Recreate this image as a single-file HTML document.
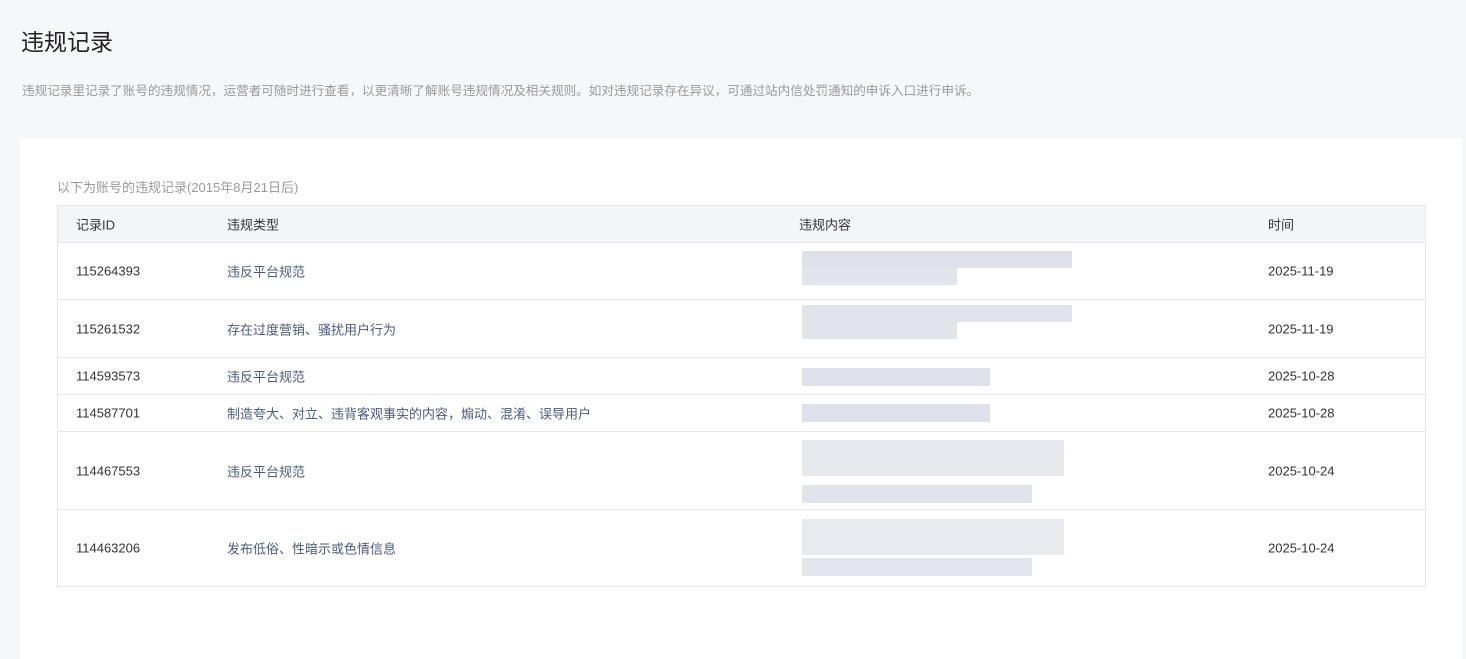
<!DOCTYPE html>
<html><head><meta charset="utf-8"><style>
body{margin:0;background:#f6f7f9;font-family:"Liberation Sans","Noto Sans CJK SC",sans-serif;width:1466px;height:638px;overflow:hidden;position:relative}
.t{position:absolute;left:21px;top:23px;font-size:23px;color:#222}
.d{position:absolute;left:22px;top:80px;font-size:12.6px;color:#9a9a9a}
.card{position:absolute;left:20px;top:139px;width:1442px;height:520px;background:#fff}
.s{position:absolute;left:57px;top:177px;font-size:13px;color:#999}
.tb{position:absolute;left:57px;top:205px;width:1367px;border:1px solid #e4e6eb;border-bottom:none}
.r{position:relative;border-bottom:1px solid #e4e6eb;font-size:13px;color:#333}
.r span{position:absolute;top:50%;transform:translateY(-50%);white-space:nowrap}
.h{background:#f4f5f8;color:#333}
.c1{left:18px}.c2{left:169px;color:#4a5a7a}.c3{left:741px}.c4{left:1210px}
.b{position:absolute;background:#d6d9e3}
</style></head><body>
<div class="t">违规记录</div>
<div class="d">违规记录里记录了账号的违规情况，运营者可随时进行查看，以更清晰了解账号违规情况及相关规则。如对违规记录存在异议，可通过站内信处罚通知的申诉入口进行申诉。</div>
<div class="card"></div>
<div class="s">以下为账号的违规记录(2015年8月21日后)</div>
<div class="tb">
<div class="r h" style="height:36px"><span class="c1">记录ID</span><span class="c2" style="color:#333">违规类型</span><span class="c3">违规内容</span><span class="c4">时间</span></div>
<div class="r" style="height:56px"><span class="c1">115264393</span><span class="c2">违反平台规范</span><span class="c4">2025-11-19</span></div>
<div class="r" style="height:57px"><span class="c1">115261532</span><span class="c2">存在过度营销、骚扰用户行为</span><span class="c4">2025-11-19</span></div>
<div class="r" style="height:36px"><span class="c1">114593573</span><span class="c2">违反平台规范</span><span class="c4">2025-10-28</span></div>
<div class="r" style="height:36px"><span class="c1">114587701</span><span class="c2">制造夸大、对立、违背客观事实的内容，煽动、混淆、误导用户</span><span class="c4">2025-10-28</span></div>
<div class="r" style="height:77px"><span class="c1">114467553</span><span class="c2">违反平台规范</span><span class="c4">2025-10-24</span></div>
<div class="r" style="height:76px"><span class="c1">114463206</span><span class="c2">发布低俗、性暗示或色情信息</span><span class="c4">2025-10-24</span></div>
</div>
<div class="b" style="left:802px;top:251px;width:270px;height:17px;opacity:.8"></div>
<div class="b" style="left:802px;top:268px;width:155px;height:17px;opacity:.7"></div>
<div class="b" style="left:802px;top:305px;width:270px;height:17px;opacity:.75"></div>
<div class="b" style="left:802px;top:322px;width:155px;height:17px;opacity:.7"></div>
<div class="b" style="left:802px;top:368px;width:188px;height:18px;opacity:.8"></div>
<div class="b" style="left:802px;top:404px;width:188px;height:18px;opacity:.8"></div>
<div class="b" style="left:802px;top:440px;width:262px;height:36px;opacity:.6"></div>
<div class="b" style="left:802px;top:485px;width:230px;height:18px;opacity:.7"></div>
<div class="b" style="left:802px;top:519px;width:262px;height:36px;opacity:.55"></div>
<div class="b" style="left:802px;top:558px;width:230px;height:18px;opacity:.65"></div>
</body></html>
